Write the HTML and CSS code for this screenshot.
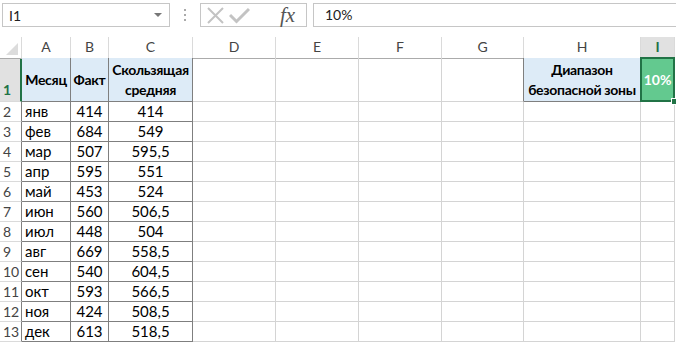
FILE: index.html
```html
<!DOCTYPE html>
<html lang="ru">
<head>
  <meta charset="UTF-8" />
  <title>Скользящая средняя</title>
  <link rel="stylesheet" href="styles.css">
</head>
<body>
  <div class="formula-bar">
    <div class="name-box">
      <span>I1</span>
      <span class="arrow"></span>
    </div>
    <div class="dots"><span></span><span></span><span></span></div>
    <div class="fx-box">
      <svg class="ico-x" width="17" height="17" viewBox="0 0 17 17"><path d="M1 1 L16 16 M16 1 L1 16" stroke="#c3c3c3" stroke-width="2" fill="none"/></svg>
      <svg class="ico-ok" width="21" height="17" viewBox="0 0 21 17"><path d="M1 8 L7.5 14.5 L20 2" stroke="#c3c3c3" stroke-width="3" fill="none"/></svg>
      <span class="fx">fx</span>
    </div>
    <div class="value-box">10%</div>
  </div>

  <div class="sheet">
    <div class="row hdr">
      <div class="corner"></div>
      <div class="ch">A</div><div class="ch">B</div><div class="ch">C</div><div class="ch">D</div>
      <div class="ch">E</div><div class="ch">F</div><div class="ch">G</div><div class="ch">H</div>
      <div class="ch active">I</div>
    </div>

    <div class="row first">
      <div class="rh active">1</div>
      <div class="c t head">Месяц</div>
      <div class="c t head">Факт</div>
      <div class="c t head">Скользящая<br>средняя</div>
      <div class="c"></div><div class="c"></div><div class="c"></div><div class="c tl"></div>
      <div class="c t head">Диапазон<br>безопасной зоны</div>
      <div class="c sel">10%</div>
    </div>

    <div class="row"><div class="rh">2</div><div class="c t">янв</div><div class="c t n">414</div><div class="c t n">414</div><div class="c"></div><div class="c"></div><div class="c"></div><div class="c"></div><div class="c"></div><div class="c"></div></div>
    <div class="row"><div class="rh">3</div><div class="c t">фев</div><div class="c t n">684</div><div class="c t n">549</div><div class="c"></div><div class="c"></div><div class="c"></div><div class="c"></div><div class="c"></div><div class="c"></div></div>
    <div class="row"><div class="rh">4</div><div class="c t">мар</div><div class="c t n">507</div><div class="c t n">595,5</div><div class="c"></div><div class="c"></div><div class="c"></div><div class="c"></div><div class="c"></div><div class="c"></div></div>
    <div class="row"><div class="rh">5</div><div class="c t">апр</div><div class="c t n">595</div><div class="c t n">551</div><div class="c"></div><div class="c"></div><div class="c"></div><div class="c"></div><div class="c"></div><div class="c"></div></div>
    <div class="row"><div class="rh">6</div><div class="c t">май</div><div class="c t n">453</div><div class="c t n">524</div><div class="c"></div><div class="c"></div><div class="c"></div><div class="c"></div><div class="c"></div><div class="c"></div></div>
    <div class="row"><div class="rh">7</div><div class="c t">июн</div><div class="c t n">560</div><div class="c t n">506,5</div><div class="c"></div><div class="c"></div><div class="c"></div><div class="c"></div><div class="c"></div><div class="c"></div></div>
    <div class="row"><div class="rh">8</div><div class="c t">июл</div><div class="c t n">448</div><div class="c t n">504</div><div class="c"></div><div class="c"></div><div class="c"></div><div class="c"></div><div class="c"></div><div class="c"></div></div>
    <div class="row"><div class="rh">9</div><div class="c t">авг</div><div class="c t n">669</div><div class="c t n">558,5</div><div class="c"></div><div class="c"></div><div class="c"></div><div class="c"></div><div class="c"></div><div class="c"></div></div>
    <div class="row"><div class="rh">10</div><div class="c t">сен</div><div class="c t n">540</div><div class="c t n">604,5</div><div class="c"></div><div class="c"></div><div class="c"></div><div class="c"></div><div class="c"></div><div class="c"></div></div>
    <div class="row"><div class="rh">11</div><div class="c t">окт</div><div class="c t n">593</div><div class="c t n">566,5</div><div class="c"></div><div class="c"></div><div class="c"></div><div class="c"></div><div class="c"></div><div class="c"></div></div>
    <div class="row"><div class="rh">12</div><div class="c t">ноя</div><div class="c t n">424</div><div class="c t n">508,5</div><div class="c"></div><div class="c"></div><div class="c"></div><div class="c"></div><div class="c"></div><div class="c"></div></div>
    <div class="row"><div class="rh">13</div><div class="c t">дек</div><div class="c t n">613</div><div class="c t n">518,5</div><div class="c"></div><div class="c"></div><div class="c"></div><div class="c"></div><div class="c"></div><div class="c"></div></div>
  </div>
</body>
</html>
```

FILE: styles.css
```css
body {
  margin: 0;
  background: #fff;
  font-family: Lato, "Liberation Sans", sans-serif;
  color: #000;
  overflow: hidden;
}

/* formula bar */
.formula-bar {
  display: flex;
  align-items: center;
  height: 37px;
  padding: 0 0 7px 2px;
  box-sizing: border-box;
}
.name-box {
  width: 168px;
  height: 24px;
  border: 1px solid #c6c6c6;
  box-sizing: border-box;
  display: flex;
  align-items: center;
  justify-content: space-between;
  padding: 0 7px 0 6px;
  font-size: 14px;
  color: #222;
}
.arrow {
  width: 0;
  height: 0;
  border-left: 4px solid transparent;
  border-right: 4px solid transparent;
  border-top: 4px solid #777;
}
.dots {
  width: 30px;
  display: flex;
  flex-direction: column;
  align-items: center;
  gap: 3px;
}
.dots span {
  width: 2px;
  height: 2px;
  background: #aaa;
}
.fx-box {
  width: 107px;
  height: 24px;
  border: 1px solid #c6c6c6;
  box-sizing: border-box;
  display: flex;
  align-items: center;
  padding-left: 6px;
}
.ico-ok {
  margin-left: 5px;
}
.fx {
  font-family: "Liberation Serif", serif;
  font-style: italic;
  font-size: 21px;
  color: #555;
  margin-left: 30px;
  line-height: 1;
}
.value-box {
  flex: 1;
  height: 24px;
  margin-left: 6px;
  border: 1px solid #c6c6c6;
  border-right: none;
  box-sizing: border-box;
  font-size: 14px;
  padding: 2px 0 0 11px;
  color: #222;
}

/* grid */
.row {
  display: grid;
  grid-template-columns: 22px 49px 38px 84px 83px 83px 83px 82px 117px 34px;
  height: 20px;
}
.row.hdr {
  height: 21px;
}
.row.first {
  height: 44px;
}
.corner {
  border-right: 1px solid #dadada;
  border-bottom: 1px solid #ababab;
  position: relative;
}
.corner::after {
  content: "";
  position: absolute;
  right: 3px;
  bottom: 3px;
  border-left: 12px solid transparent;
  border-bottom: 12px solid #dcdcdc;
}
.ch {
  border-right: 1px solid #dadada;
  border-bottom: 1px solid #ababab;
  text-align: center;
  font-size: 14px;
  line-height: 20px;
  color: #444;
}
.ch.active {
  background: #e1e1e1;
  color: #217346;
  font-weight: bold;
  border-bottom: 2px solid #217346;
}
.rh {
  border-right: 1px solid #7f7f7f;
  border-bottom: 1px solid #dadada;
  font-size: 14px;
  line-height: 19px;
  padding-left: 3px;
  color: #444;
}
.rh.active {
  background: #e1e1e1;
  color: #217346;
  font-weight: bold;
  border-right: 2px solid #217346;
  display: flex;
  align-items: flex-end;
  line-height: 22px;
}
.c {
  border-right: 1px solid #d4d4d4;
  border-bottom: 1px solid #d4d4d4;
  padding: 0 3px;
  font-size: 15px;
  line-height: 19px;
  white-space: nowrap;
  overflow: hidden;
}
.c.t {
  border-right-color: #7f7f7f;
  border-bottom-color: #7f7f7f;
}
.c.tl {
  border-right-color: #7f7f7f;
}
.c.n {
  text-align: center;
}
.c.head {
  background: #ddebf7;
  font-weight: bold;
  font-size: 14px;
  letter-spacing: -0.3px;
  display: flex;
  align-items: center;
  justify-content: center;
  text-align: center;
  line-height: 20px;
  padding: 0;
}
.c.sel {
  position: relative;
  overflow: visible;
  background: #63c98f;
  color: #fff;
  font-weight: bold;
  font-size: 14px;
  display: flex;
  align-items: center;
  justify-content: center;
  padding: 0;
}
.c.sel::before {
  content: "";
  position: absolute;
  left: -1px;
  top: -1px;
  right: -1px;
  bottom: -1px;
  border: 2px solid #217346;
}
.c.sel::after {
  content: "";
  position: absolute;
  right: -4px;
  bottom: -4px;
  width: 5px;
  height: 5px;
  background: #217346;
  border: 1px solid #fff;
}
```
